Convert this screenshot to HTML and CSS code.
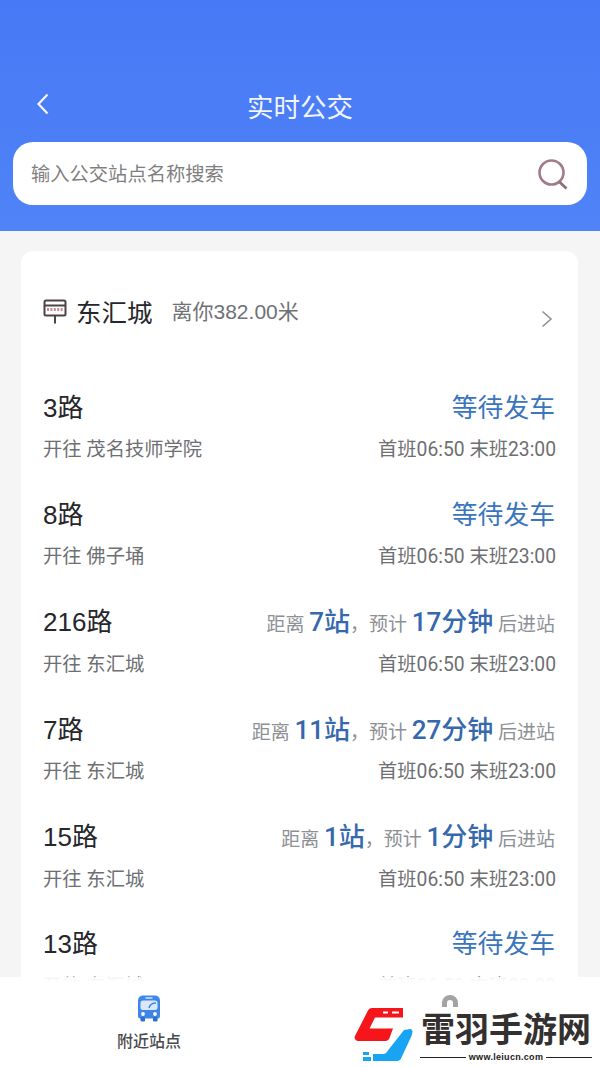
FILE: index.html
```html
<!DOCTYPE html>
<html lang="zh-CN">
<head>
<meta charset="utf-8">
<title>实时公交</title>
<link rel="stylesheet" href="styles.css">
</head>
<body>
<div class="screen">
  <header class="header">
    <div class="titlebar">
      <svg class="back" width="16" height="24" viewBox="0 0 16 24"><path d="M12.500 2.500 3.500 12l9 9.500" fill="none" stroke="#f4f7ff" stroke-width="2.200"/></svg>
      <h1 class="title">实时公交</h1>
    </div>
    <div class="search">
      <span class="placeholder">输入公交站点名称搜索</span>
      <svg class="search-icon" width="32" height="32" viewBox="0 0 32 32"><circle cx="14.500" cy="14.500" r="12" fill="none" stroke="#a27c85" stroke-width="2.600"/><path d="M22.500 24 29.500 30.500" stroke="#8c7078" stroke-width="2.800" fill="none"/></svg>
    </div>
  </header>

  <main class="card">
    <div class="station">
      <svg class="station-icon" width="24" height="26" viewBox="0 0 24 26"><rect x="1.500" y="1.500" width="21" height="15" rx="1.500" fill="#fff" stroke="#4b4346" stroke-width="2"/><path d="M1.500 6.500h21" stroke="#4b4346" stroke-width="2"/><path d="M4 10.500h16" stroke="#c98b93" stroke-width="3" stroke-dasharray="2 1.400"/><path d="M12 16.500v8" stroke="#4b4346" stroke-width="2"/></svg>
      <span class="station-name">东汇城</span>
      <span class="distance">离你382.00米</span>
      <svg class="chev" width="14" height="20" viewBox="0 0 14 20"><path d="M2.500 2.500 11 10l-8.500 7.500" fill="none" stroke="#8d9094" stroke-width="1.600"/></svg>
    </div>

    <div class="route">
      <div class="line"><span class="route-name">3路</span><span class="status">等待发车</span></div>
      <div class="line sub"><span>开往 茂名技师学院</span><span>首班06:50 末班23:00</span></div>
    </div>
    <div class="route">
      <div class="line"><span class="route-name">8路</span><span class="status">等待发车</span></div>
      <div class="line sub"><span>开往 佛子埇</span><span>首班06:50 末班23:00</span></div>
    </div>
    <div class="route">
      <div class="line"><span class="route-name">216路</span><span class="eta">距离 <b>7站</b>，预计 <b>17分钟</b> 后进站</span></div>
      <div class="line sub"><span>开往 东汇城</span><span>首班06:50 末班23:00</span></div>
    </div>
    <div class="route">
      <div class="line"><span class="route-name">7路</span><span class="eta">距离 <b>11站</b>，预计 <b>27分钟</b> 后进站</span></div>
      <div class="line sub"><span>开往 东汇城</span><span>首班06:50 末班23:00</span></div>
    </div>
    <div class="route">
      <div class="line"><span class="route-name">15路</span><span class="eta">距离 <b>1站</b>，预计 <b>1分钟</b> 后进站</span></div>
      <div class="line sub"><span>开往 东汇城</span><span>首班06:50 末班23:00</span></div>
    </div>
    <div class="route">
      <div class="line"><span class="route-name">13路</span><span class="status">等待发车</span></div>
      <div class="line sub"><span>开往 东汇城</span><span>首班06:50 末班23:00</span></div>
    </div>
  </main>

  <nav class="tabbar">
    <div class="tab">
      <svg width="24" height="27" viewBox="0 0 24 27"><path d="M6 .5h12a5 5 0 0 1 5 5V21a2.500 2.500 0 0 1-2.500 2.500h-17A2.500 2.500 0 0 1 1 21V5.500a5 5 0 0 1 5-5z" fill="#3f86ea"/><rect x="3.500" y="22" width="4.500" height="4.500" rx="1.200" fill="#2f6fc9"/><rect x="16" y="22" width="4.500" height="4.500" rx="1.200" fill="#2f6fc9"/><rect x="3.500" y="5.500" width="17" height="9.500" rx="2.500" fill="#dbe8fb"/><path d="M12 13c.8-3 3.500-5 7-5" fill="none" stroke="#3f86ea" stroke-width="1.500"/><path d="M8.500 3h7" stroke="#dbe8fb" stroke-width="1.400"/><circle cx="6" cy="19" r="1.900" fill="#fff"/><circle cx="18" cy="19" r="1.900" fill="#fff"/></svg>
      <span class="tab-label">附近站点</span>
    </div>
    <div class="tab">
      <svg class="tab-ghost" width="16" height="12" viewBox="0 0 16 12"><path d="M2.500 12V8a5.500 5.500 0 0 1 11 0v4" fill="none" stroke="#a3a3a3" stroke-width="5"/></svg>
    </div>
  </nav>

  <div class="watermark">
    <svg class="wm-logo" width="60" height="58" viewBox="354 1006 60 58">
      <path d="M372 1008h31v9.500h-28l-5.500 11H393l-3.500 9.500a4 4 0 0 1-3.500 3h-28a3.500 3.500 0 0 1-3-5l13-25.500a4 4 0 0 1 3.500-2.500z" fill="#f5151b"/>
      <path d="M404 1030l6-1a2.500 2.500 0 0 1 2.500 3l-1 4-10 21.500a5 5 0 0 1-4.500 3.500H373v-7h10a5 5 0 0 0 4.500-3z" fill="#19a4f3"/>
      <path d="M363 1052h6v3h-6zM363 1057h8v4h-8z" fill="#19a4f3"/>
      <path d="M383 1012.500h5M392 1012.500h7" stroke="#fff" stroke-width="1.800" fill="none"/>
    </svg>
    <div class="wm-text">
      <span class="wm-name">雷羽手游网</span>
      <span class="wm-url">www.leiucn.com</span>
    </div>
  </div>
</div>
</body>
</html>
```

FILE: styles.css
```css
* { box-sizing: border-box; }
html, body { margin: 0; padding: 0; }
body { font-family: Roboto, "Noto Sans CJK SC", sans-serif; background: #f5f5f6; }
.screen { position: relative; width: 600px; height: 1067px; overflow: hidden; background: #f5f5f6; }

.header { height: 231px; padding: 88px 13px 0; background: linear-gradient(#4779f6, #4f83f6); }
.titlebar { position: relative; height: 54px; display: flex; justify-content: center; }
.back { position: absolute; left: 22px; top: 4px; }
.title { margin: 0; font-size: 26.500px; font-weight: 400; line-height: 39px; color: #f1f5fd; }
.search { height: 63px; background: #fff; border-radius: 20px; display: flex; align-items: center; justify-content: space-between; padding: 0 18px 2px 18px; }
.placeholder { font-size: 19.300px; color: #7f7f7f; }
.search-icon { margin-top: 3px; }

.card { margin: 20px 22px 0 21px; height: 900px; background: #fff; border-radius: 12px; padding: 0 22px 0 22px; }
.station { position: relative; height: 133px; padding-top: 43px; display: flex; align-items: flex-start; }
.station-icon { margin-top: 5px; }
.station-name { margin-left: 9px; font-size: 25.500px; line-height: 38px; color: #26272b; }
.distance { margin-left: 19px; font-size: 21px; line-height: 36px; color: #6f7175; font-family: "Liberation Sans", "Noto Sans CJK SC", sans-serif; }
.chev { position: absolute; right: 2px; top: 58px; }

.route { height: 107.400px; }
.line { display: flex; justify-content: space-between; align-items: center; }
.line:first-child { height: 42px; }
.sub { height: 44px; font-size: 19.300px; color: #6d6f72; white-space: nowrap; }
.route-name { font-size: 26px; color: #26272b; font-family: "Liberation Sans", "Noto Sans CJK SC", sans-serif; }
.status { margin-right: 1px; font-size: 25.800px; color: #3a75bd; }
.eta { margin-right: 1px; font-size: 19px; color: #8d9095; white-space: nowrap; }
.eta b { font-size: 26px; font-weight: 500; color: #3568ad; font-family: Roboto, "Noto Sans CJK SC", sans-serif; }

.tabbar { position: absolute; left: 0; right: 0; bottom: 0; height: 90px; background: linear-gradient(rgba(255,255,255,.9), #fff 6px); display: flex; }
.tab { width: 298px; display: flex; flex-direction: column; align-items: center; padding-top: 18px; }
.tab-label { margin-top: 8px; font-size: 16px; line-height: 24px; color: #4a4a4e; font-weight: 500; }
.tab-ghost { margin-left: 5px; }

.watermark { position: absolute; left: 354px; top: 1006px; display: flex; gap: 6px; }
.wm-text { display: flex; flex-direction: column; align-items: center; width: 172px; padding-top: 3px; }
.wm-name { font-family: "Noto Sans CJK SC", serif; font-size: 34px; line-height: 38px; font-weight: 700; color: #33302f; white-space: nowrap; }
.wm-url { width: 100%; margin-top: 3px; display: flex; align-items: center; gap: 3px; font-family: "Liberation Sans", sans-serif; font-size: 9px; line-height: 14px; color: #222; white-space: nowrap; font-weight: 700; letter-spacing: .3px; }
.wm-url::before, .wm-url::after { content: ""; flex: 1; height: 1px; background: #222; }
```
